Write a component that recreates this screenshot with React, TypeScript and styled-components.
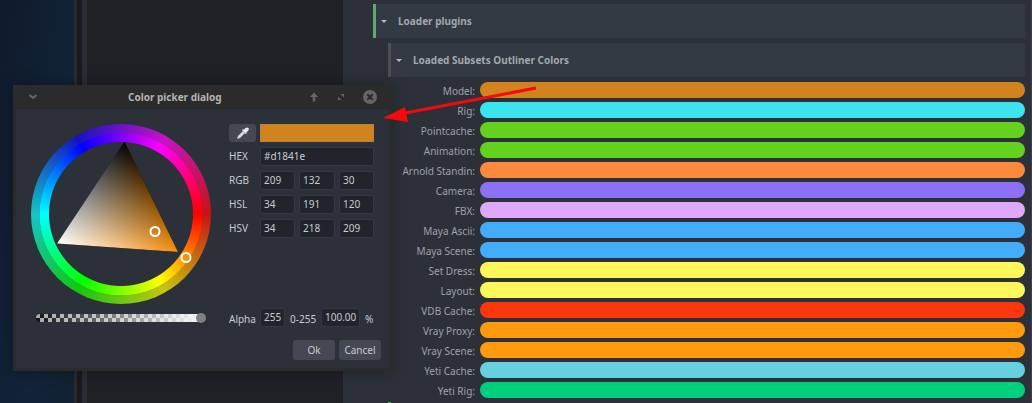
import React from 'react';
import styled, { createGlobalStyle } from 'styled-components';

const Global = createGlobalStyle`
  html, body { margin: 0; padding: 0; background: #1f2127; overflow: hidden; }
  * { box-sizing: border-box; }
`;

const Page = styled.div`
  position: relative;
  width: 1032px;
  height: 403px;
  overflow: hidden;
  display: flex;
  font-family: "Noto Sans", sans-serif;
  font-size: 10px;
  color: #c7cad0;
`;

const Desktop = styled.div`
  width: 74px;
  background: linear-gradient(100deg, #0f1b2c 0%, #13233a 70%, #12202f 100%);
`;
const Frame = styled.div`
  width: 13px;
  flex: none;
  background: linear-gradient(90deg, #2a2a2c 0 3px, #191a1e 3px 8px, #2a2d37 8px 13px);
`;
const Sidebar = styled.div`
  width: 256px;
  background: #1f2127;
`;
const Main = styled.div`
  flex: 1;
  background: #2c3038;
  padding: 4px 6px 0 30px;
  border-right: 1px solid #3d414a;
  display: flex;
  flex-direction: column;
`;
const Section = styled.div<{ $accent: string; $indent?: number }>`
  height: 34px;
  flex: none;
  margin-left: ${p => p.$indent ?? 0}px;
  margin-bottom: 5px;
  border-left: 3px solid ${p => p.$accent};
  background: #343a44;
  display: flex;
  align-items: center;
  padding-left: 5px;
  gap: 11px;
  font-weight: 700;
  color: #a3a7ae;
`;
const Caret = styled.span`
  width: 0;
  height: 0;
  border-left: 3px solid transparent;
  border-right: 3px solid transparent;
  border-top: 3px solid #b6bac0;
`;
const Rows = styled.div`
  display: flex;
  flex-direction: column;
  gap: 4px;
`;
const Row = styled.div`
  display: grid;
  grid-template-columns: 102px 1fr;
  column-gap: 5px;
  align-items: center;
  height: 16px;
  color: #9ea2a9;
`;
const RowLabel = styled.span`
  text-align: right;
  white-space: nowrap;
  font-size: 10px;
  padding-top: 2px;
`;
const Pill = styled.div<{ $c: string }>`
  height: 16px;
  border-radius: 8px;
  background: ${p => p.$c};
`;
const NextBar = styled.div`
  width: 3px;
  height: 4px;
  margin: 4px 0 0 15px;
  background: #5fa777;
  flex: none;
`;

const Dialog = styled.div`
  position: absolute;
  left: 13px;
  top: 85px;
  width: 379px;
  height: 286px;
  background: #2c3038;
  border: 3px solid #2b2b2b;
  border-top: none;
  box-shadow: 0 0 14px rgba(0, 0, 0, 0.3);
  display: flex;
  flex-direction: column;
`;
const TitleBar = styled.div`
  height: 24px;
  margin: 0 -3px;
  background: #2b2b2b;
  display: grid;
  grid-template-columns: 100px auto 1fr;
  align-items: center;
  padding: 0 15px;
  flex: none;
`;
const Title = styled.div`
  font-weight: 700;
  font-size: 10px;
  color: #b4b4b4;
`;
const TitleIcons = styled.div`
  display: flex;
  justify-content: flex-end;
  align-items: center;
  gap: 15px;
`;
const Body = styled.div`
  flex: 1;
  display: grid;
  grid-template-columns: 213px 1fr;
`;
const Left = styled.div`
  padding: 15px 0 0 15px;
  display: flex;
  flex-direction: column;
`;
const Wheel = styled.div`
  position: relative;
  width: 180px;
  height: 180px;
  border-radius: 50%;
  background:
    radial-gradient(circle closest-side, #2c3038 0 71.5px, transparent 72.5px 81px, rgba(64, 64, 64, 0.3) 81.5px),
    conic-gradient(from 90deg, #f00, #ff0, #0f0, #0ff, #00f, #f0f, #f00);
`;
const WheelArt = styled.svg`
  position: absolute;
  inset: 0;
`;
const TriangleGroup = styled.g`
  isolation: isolate;
`;
const Additive = styled.polygon`
  mix-blend-mode: plus-lighter;
`;
const Slider = styled.div`
  position: relative;
  margin: 10px 0 0 5px;
  width: 165px;
  height: 8px;
  border-radius: 4px;
  background:
    linear-gradient(90deg, rgba(245, 245, 245, 0) 0%, rgba(245, 245, 245, 0.97) 95%),
    conic-gradient(#111 25%, #aaa 0 50%, #111 0 75%, #aaa 0) 0 0 / 8px 8px;
`;
const SliderKnob = styled.div`
  position: absolute;
  right: -5px;
  top: -1px;
  width: 10px;
  height: 10px;
  border-radius: 50%;
  background: #808080;
`;
const Right = styled.div`
  padding: 15px 0 0 0;
  display: flex;
  flex-direction: column;
`;
const FormRow = styled.div`
  display: grid;
  grid-template-columns: 27px 114px;
  column-gap: 4px;
  margin-top: 5px;
  align-items: center;
  height: 19px;
`;
const PickerRow = styled(FormRow)`
  margin-top: 0;
  height: 18px;
`;
const Pick = styled.button`
  width: 27px;
  height: 18px;
  padding: 0;
  border: none;
  border-radius: 3px;
  background: #434854;
  display: flex;
  align-items: center;
  justify-content: center;
`;
const Swatch = styled.div`
  height: 18px;
  background: #d1841e;
  border: 1px solid #b8823a;
`;
const Label = styled.span`
  font-size: 10px;
  color: #c7cad0;
  white-space: nowrap;
`;
const FormLabel = styled(Label)`
  padding-bottom: 2px;
`;
const Field = styled.div<{ $w?: number }>`
  height: 19px;
  ${p => (p.$w ? `width: ${p.$w}px;` : '')}
  background: #21252b;
  border: 1px solid #343842;
  border-radius: 3px;
  padding: 0 3px;
  line-height: 16px;
  font-size: 10px;
  color: #c7cad0;
  white-space: nowrap;
`;
const Triple = styled.div`
  display: grid;
  grid-template-columns: 35px 36px 35px;
  column-gap: 4px;
`;
const AlphaRow = styled.div`
  position: absolute;
  left: 213px;
  top: 223px;
  display: flex;
  align-items: center;
  height: 19px;
`;
const AlphaLabel = styled(Label)<{ $w: number; $pad?: number }>`
  width: ${p => p.$w}px;
  padding-left: ${p => p.$pad ?? 0}px;
  padding-top: 2px;
  flex: none;
`;
const Buttons = styled.div`
  position: absolute;
  left: 277px;
  top: 255px;
  display: flex;
  gap: 4px;
`;
const Btn = styled.button`
  width: 42px;
  height: 20px;
  padding: 0;
  border: none;
  border-radius: 3px;
  background: #434854;
  color: #c7cad0;
  font: 10px "Noto Sans", sans-serif;
`;
const Arrow = styled.svg`
  position: absolute;
  left: 0;
  top: 0;
  pointer-events: none;
`;

const rows: [string, string][] = [
  ['Model:', '#d1841e'],
  ['Rig:', '#3ce4ee'],
  ['Pointcache:', '#62d21e'],
  ['Animation:', '#62d21e'],
  ['Arnold Standin:', '#fb8a3c'],
  ['Camera:', '#8b71f4'],
  ['FBX:', '#dfa8fb'],
  ['Maya Ascii:', '#43acfb'],
  ['Maya Scene:', '#43acfb'],
  ['Set Dress:', '#fff75a'],
  ['Layout:', '#fff75a'],
  ['VDB Cache:', '#fb370e'],
  ['Vray Proxy:', '#ff9a0e'],
  ['Vray Scene:', '#ff9a0e'],
  ['Yeti Cache:', '#64d0e0'],
  ['Yeti Rig:', '#00d07e'],
];

type P = [number, number];
// triangle vertices inside the wheel box (wheel origin on the page is 31,124)
const A: P = [93.5, 17.5];
const B: P = [26, 119.5];
const C: P = [147, 128];
const tri = `${A} ${B} ${C}`;
const foot = (p: P, a: P, b: P): P => {
  const dx = b[0] - a[0];
  const dy = b[1] - a[1];
  const t = ((p[0] - a[0]) * dx + (p[1] - a[1]) * dy) / (dx * dx + dy * dy);
  return [a[0] + t * dx, a[1] + t * dy];
};
const fB = foot(B, A, C);
const fC = foot(C, A, B);

export default function App() {
  return (
    <>
      <Global />
      <Page>
        <Desktop />
        <Frame />
        <Sidebar />
        <Main>
          <Section $accent="#5fa777"><Caret />Loader plugins</Section>
          <Section $accent="#4d4f53" $indent={15}><Caret />Loaded Subsets Outliner Colors</Section>
          <Rows>
            {rows.map(([l, c]) => (
              <Row key={l}>
                <RowLabel>{l}</RowLabel>
                <Pill $c={c} />
              </Row>
            ))}
          </Rows>
          <NextBar />
        </Main>
        <Dialog>
          <TitleBar>
            <svg width="10" height="6" viewBox="0 0 10 6">
              <path d="M1.5 1 L5 4 L8.5 1" fill="none" stroke="#666" strokeWidth="2" />
            </svg>
            <Title>Color picker dialog</Title>
            <TitleIcons>
              <svg width="10" height="10" viewBox="0 0 10 10">
                <path d="M5 0.5 L9 5 H6.3 V9.5 H3.7 V5 H1 Z" fill="#666" />
              </svg>
              <svg width="8" height="8" viewBox="0 0 8 8" style={{ margin: '0 3px' }}>
                <path d="M3.5 1 H7 V4.5 Z M1 3.5 L4.5 7 H1 Z" fill="#666" />
              </svg>
              <svg width="14" height="14" viewBox="0 0 14 14">
                <circle cx="7" cy="7" r="7" fill="#666" />
                <path d="M4.3 4.3 L9.7 9.7 M9.7 4.3 L4.3 9.7" stroke="#2b2b2b" strokeWidth="2" />
              </svg>
            </TitleIcons>
          </TitleBar>
          <Body>
            <Left>
              <Wheel>
                <WheelArt width="180" height="180" viewBox="0 0 180 180">
                  <defs>
                    <linearGradient id="wg" gradientUnits="userSpaceOnUse" x1={B[0]} y1={B[1]} x2={fB[0]} y2={fB[1]}>
                      <stop offset="0" stopColor="#fff" stopOpacity="1" />
                      <stop offset="1" stopColor="#fff" stopOpacity="0" />
                    </linearGradient>
                    <linearGradient id="hg" gradientUnits="userSpaceOnUse" x1={C[0]} y1={C[1]} x2={fC[0]} y2={fC[1]}>
                      <stop offset="0" stopColor="#f59010" stopOpacity="1" />
                      <stop offset="1" stopColor="#f59010" stopOpacity="0" />
                    </linearGradient>
                  </defs>
                  <TriangleGroup>
                    <polygon points={tri} fill="#000" />
                    <Additive points={tri} fill="url(#wg)" />
                    <Additive points={tri} fill="url(#hg)" />
                  </TriangleGroup>
                  <circle cx="124" cy="107.5" r="4.5" fill="none" stroke="#fff" strokeWidth="2" />
                  <circle cx="155" cy="133.5" r="4.5" fill="none" stroke="#fff" strokeWidth="2" />
                </WheelArt>
              </Wheel>
              <Slider><SliderKnob /></Slider>
            </Left>
            <Right>
              <PickerRow>
                <Pick>
                  <svg width="13" height="13" viewBox="0 0 13 13">
                    <path d="M1 12 L2 9 L7 4 L9 6 L4 11 Z" fill="#d8dade" />
                    <path d="M6.5 2.5 L10.5 6.5 M8 4 L10 1.5 Q11 0.8 11.8 1.5 Q12.5 2.3 11.5 3.3 L9.5 5.5" stroke="#e8eaee" strokeWidth="1.5" fill="#e8eaee" />
                  </svg>
                </Pick>
                <Swatch />
              </PickerRow>
              <FormRow>
                <FormLabel>HEX</FormLabel>
                <Field>#d1841e</Field>
              </FormRow>
              <FormRow>
                <FormLabel>RGB</FormLabel>
                <Triple><Field>209</Field><Field>132</Field><Field>30</Field></Triple>
              </FormRow>
              <FormRow>
                <FormLabel>HSL</FormLabel>
                <Triple><Field>34</Field><Field>191</Field><Field>120</Field></Triple>
              </FormRow>
              <FormRow>
                <FormLabel>HSV</FormLabel>
                <Triple><Field>34</Field><Field>218</Field><Field>209</Field></Triple>
              </FormRow>
            </Right>
          </Body>
          <AlphaRow>
            <AlphaLabel $w={31}>Alpha</AlphaLabel>
            <Field $w={25}>255</Field>
            <AlphaLabel $w={36} $pad={5}>0-255</AlphaLabel>
            <Field $w={39}>100.00</Field>
            <AlphaLabel $w={14} $pad={5}>%</AlphaLabel>
          </AlphaRow>
          <Buttons>
            <Btn>Ok</Btn>
            <Btn>Cancel</Btn>
          </Buttons>
        </Dialog>
        <Arrow width="1032" height="403" viewBox="0 0 1032 403">
          <path d="M536 88 L400 114" stroke="#f40a0c" strokeWidth="3" fill="none" />
          <polygon points="383,118 405,107 408,122" fill="#f40a0c" />
        </Arrow>
      </Page>
    </>
  );
}
